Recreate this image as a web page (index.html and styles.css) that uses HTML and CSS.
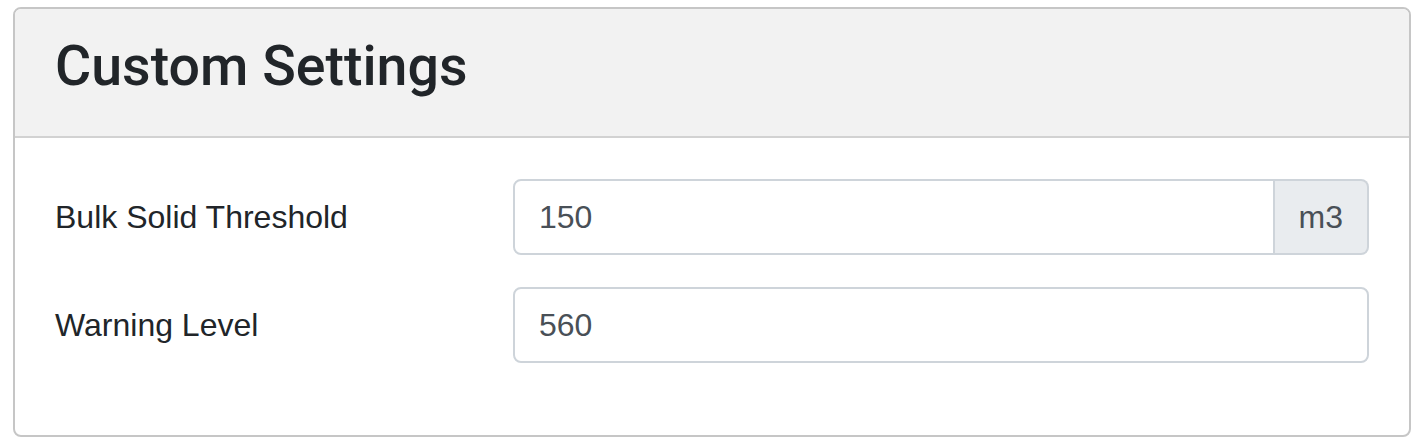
FILE: index.html
```html
<!DOCTYPE html>
<html lang="en">
<head>
  <meta charset="UTF-8" />
  <meta name="viewport" content="width=device-width, initial-scale=1.0"/>
  <title>Custom Settings</title>
  <link rel="stylesheet" href="styles.css">
</head>
<body>
  <div class="card">
    <div class="card-header">
      <h3>Custom Settings</h3>
    </div>
    <div class="card-body">
      <div class="form-row">
        <label for="threshold">Bulk Solid Threshold</label>
        <div class="input-group">
          <input type="text" id="threshold" value="150" />
          <span class="append">m3</span>
        </div>
      </div>
      <div class="form-row">
        <label for="warning">Warning Level</label>
        <div class="input-group">
          <input type="text" id="warning" value="560" />
        </div>
      </div>
    </div>
  </div>
</body>
</html>
```

FILE: styles.css
```css
body {
  margin: 0;
  padding: 7px 11px 0 13px;
  background: #fff;
  font-family: "Liberation Sans", Arial, Helvetica, sans-serif;
  color: #212529;
}
.card {
  border: 2px solid #c6c6c6;
  border-radius: 8px;
  overflow: hidden;
  background: #fff;
}
.card-header {
  background: #f2f2f2;
  padding: 24px 40px;
  border-bottom: 2px solid #d2d2d2;
}
.card-header h3 {
  margin: 0 0 12px;
  font-family: Roboto, "Liberation Sans", Arial, sans-serif;
  font-size: 55.5px;
  line-height: 67px;
  font-weight: 500;
  color: #212529;
}
.card-body {
  padding: 41px 40px 40px;
}
.form-row {
  display: grid;
  grid-template-columns: calc((100% + 60px) / 3 - 60px) 1fr;
  column-gap: 60px;
  margin-bottom: 32px;
}
.form-row label {
  font-size: 32px;
  line-height: 48px;
  padding-top: 14px;
}
.input-group {
  display: flex;
}
.input-group input {
  flex: 1;
  min-width: 0;
  height: 76px;
  box-sizing: border-box;
  padding: 12px 24px;
  font-family: inherit;
  font-size: 32px;
  line-height: 48px;
  color: #495057;
  background: #fff;
  border: 2px solid #ced4da;
  border-radius: 8px;
  outline: none;
}
.append {
  display: flex;
  align-items: center;
  padding: 12px 24px;
  font-size: 32px;
  line-height: 48px;
  color: #495057;
  background: #e9ecef;
  border: 2px solid #ced4da;
  border-left: none;
  border-radius: 0 8px 8px 0;
  box-sizing: border-box;
  height: 76px;
}
.input-group input:not(:last-child) {
  border-top-right-radius: 0;
  border-bottom-right-radius: 0;
}
```
